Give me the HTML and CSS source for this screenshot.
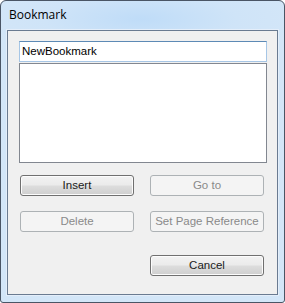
FILE: index.html
```html
<!DOCTYPE html>
<html>
<head>
<meta charset="utf-8">
<link rel="stylesheet" href="styles.css">
</head>
<body>
<div class="window">
  <div class="titlebar"><span class="title">Bookmark</span></div>
  <div class="client">
    <div class="textfield">NewBookmark</div>
    <div class="listbox"></div>
    <div class="buttons">
      <button class="btn">Insert</button>
      <button class="btn" disabled>Go to</button>
      <button class="btn" disabled>Delete</button>
      <button class="btn" disabled>Set Page Reference</button>
      <button class="btn cancel">Cancel</button>
    </div>
  </div>
</div>
</body>
</html>
```
FILE: styles.css
```css
html, body {
  margin: 0;
  padding: 0;
  background: #ffffff;
}
.window {
  width: 285px;
  height: 303px;
  box-sizing: border-box;
  border: 1px solid #4a5565;
  border-radius: 6px 6px 3px 3px;
  background: radial-gradient(ellipse 160px 40px at 140px 18px, #bfdcf8 0%, #cfe4f8 60%, #d3e6f8 100%), #c2daf3;
  display: flex;
  flex-direction: column;
  font-family: "DejaVu Sans", "Liberation Sans", sans-serif;
}
.titlebar {
  height: 29px;
  display: flex;
  align-items: center;
  padding-left: 8px;
  flex: none;
}
.title {
  font-family: "Open Sans", "Noto Sans", sans-serif;
  font-size: 12px;
  color: #000;
  position: relative;
  top: -1px;
}
.client {
  flex: 1;
  margin: 0 6px 7px 6px;
  border: 1px solid #6a7b91;
  background: #f0f0f0;
  padding: 10px 10px 0 11px;
  box-shadow: 0 0 0 1px #e4eefa;
}
.textfield {
  width: 248px;
  height: 21px;
  box-sizing: border-box;
  border: 1px solid #a6c6e6;
  border-top-color: #5d8ab5;
  background: #fff;
  font-family: "Liberation Sans", sans-serif;
  font-size: 11.5px;
  line-height: 19px;
  padding-left: 2px;
  color: #000;
}
.listbox {
  width: 248px;
  height: 100px;
  box-sizing: border-box;
  border: 1px solid #828790;
  background: #fff;
  margin-top: 1px;
}
.buttons {
  margin-top: 12px;
  padding-left: 1px;
  display: grid;
  grid-template-columns: 114px 114px;
  column-gap: 16px;
  row-gap: 15px;
}
.btn {
  width: 114px;
  height: 21px;
  box-sizing: border-box;
  margin: 0;
  padding: 0;
  border: 1px solid #707070;
  border-radius: 3px;
  background: linear-gradient(180deg, #f2f2f2 0%, #ebebeb 48%, #dddddd 52%, #cfcfcf 100%);
  box-shadow: inset 0 0 0 1px #fcfcfc;
  font-family: "Liberation Sans", sans-serif;
  font-size: 11.5px;
  font-weight: normal;
  color: #1a1a1a;
  line-height: 19px;
}
.btn:disabled {
  border-color: #adb2b5;
  background: #f4f4f4;
  box-shadow: none;
  color: #8a8a8a;
}
.cancel {
  grid-column: 2;
  margin-top: 8px;
}
```
